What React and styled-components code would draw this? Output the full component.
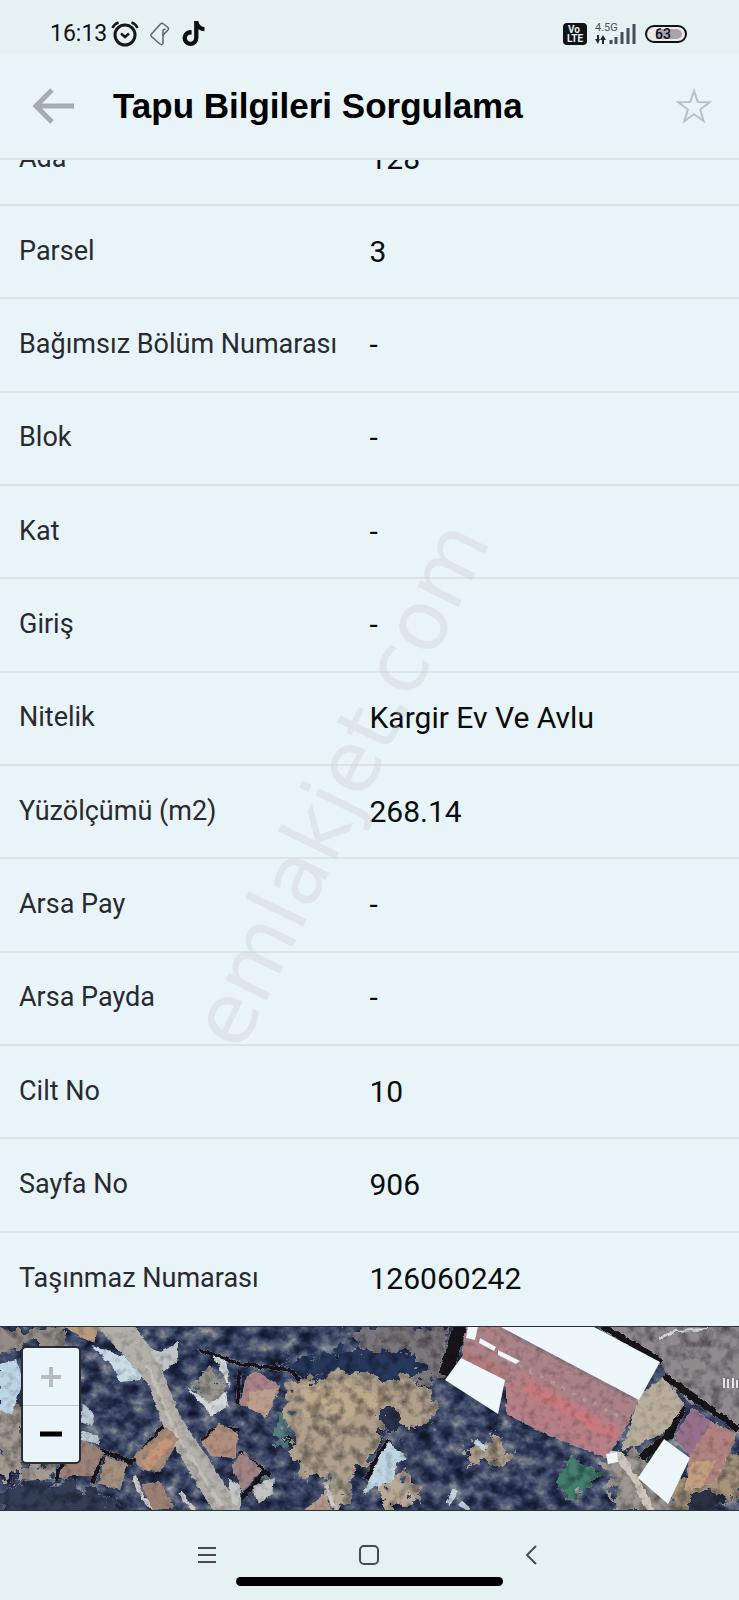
import React from "react";
import styled, { createGlobalStyle } from "styled-components";
import { FaTiktok } from "react-icons/fa";

const rows = [
    { label: "Parsel", value: "3" },
    { label: "Bağımsız Bölüm Numarası", value: "-" },
    { label: "Blok", value: "-" },
    { label: "Kat", value: "-" },
    { label: "Giriş", value: "-" },
    { label: "Nitelik", value: "Kargir Ev Ve Avlu" },
    { label: "Yüzölçümü (m2)", value: "268.14" },
    { label: "Arsa Pay", value: "-" },
    { label: "Arsa Payda", value: "-" },
    { label: "Cilt No", value: "10" },
    { label: "Sayfa No", value: "906" },
    { label: "Taşınmaz Numarası", value: "126060242" },
];

function StatusBar()
{
    return(
        <StatusStyled>
            <div className="group left">
                <time>16:13</time>
                <svg width="28" height="28" viewBox="0 0 28 28" fill="none" stroke="#15191b" strokeWidth="3">
                    <circle cx="14" cy="15" r="10" />
                    <path d="M1.5 8 Q3 4 7.500 2.500 M20.500 2.500 Q25 4 26.500 8" strokeWidth="2.500" />
                    <path d="M10 13.500 L14 17 L18 13.500" strokeWidth="2.500" />
                </svg>
                <svg className="sign" width="22" height="26" viewBox="0 0 22 26" fill="none" stroke="#5d6468" strokeWidth="1.500">
                    <path d="M2 13.500 L11.500 3 Q13 1.500 14.500 3 L19 6.500 Q20 8 19 9 L14 14 V22.500 Q13 24.500 11 23 L2.500 15.500 Q1.500 14.500 2 13.500 Z" />
                    <path d="M14 15 V9 M14 9 L16.500 8" />
                </svg>
                <FaTiktok className="tiktok" size={25} />
            </div>
            <div className="group">
                <svg width="24" height="22" viewBox="0 0 24 22">
                    <rect width="24" height="22" rx="4" fill="#101314" />
                    <text x="11" y="10" textAnchor="middle" fill="#e5f0f2" fontSize="10" fontWeight="700">Vo</text>
                    <text x="12" y="19" textAnchor="middle" fill="#e5f0f2" fontSize="10" fontWeight="700">LTE</text>
                </svg>
                <svg width="42" height="24" viewBox="0 0 42 24">
                    <text x="0" y="9" fill="#4b5154" fontSize="11">4.5G</text>
                    <path d="M0 17 H5 L3 22 Z M2 13 H4 V18 H2 Z M5 18 L8 13 L11 18 Z M7 17 H9 V22 H7 Z" fill="#22272a" />
                    <path d="M14 22 V18 M19 22 V15 M25 22 V10 M31 22 V6 M37 22 V2" transform="translate(2 0)" stroke="#494d5a" strokeWidth="3" />
                </svg>
                <svg className="battery" width="42" height="18" viewBox="0 0 42 18">
                    <rect x="1" y="1" width="40" height="16" rx="8" fill="#eee9ec" stroke="#101314" strokeWidth="2" />
                    <path d="M11 4 H32 Q37 5 37 9 T32 14 H11 Z" fill="#8c8493" opacity=".7" />
                    <text x="18" y="14" textAnchor="middle" fill="#101314" fontSize="14" fontWeight="500">63</text>
                </svg>
            </div>
        </StatusStyled>
    )
}

function TopBar()
{
    return(
        <TopBarStyled>
            <button aria-label="Geri">
                <svg width="42" height="36" viewBox="0 0 42 36" fill="none" stroke="#a5adb3" strokeWidth="5">
                    <path d="M3 18 H41 M19 2 L3 18 L19 34" />
                </svg>
            </button>
            <h1>Tapu Bilgileri Sorgulama</h1>
            <button aria-label="Favorilere ekle">
                <svg width="36" height="36" viewBox="0 0 36 36" fill="none" stroke="#b9c1c6" strokeWidth="2">
                    <path d="M18 3 L21.800 14 L33.500 14.300 L24.200 21.500 L27.600 33 L18 26.200 L8.400 33 L11.800 21.500 L2.500 14.300 L14.200 14 Z" />
                </svg>
            </button>
        </TopBarStyled>
    )
}

function AerialView()
{
    return(
        <svg className="aerial" viewBox="0 0 739 185" preserveAspectRatio="xMidYMid slice" aria-hidden="true">
            <defs>
                <filter id="trees" x="0" y="0" width="100%" height="100%" colorInterpolationFilters="sRGB">
                    <feTurbulence type="fractalNoise" baseFrequency=".06 .07" numOctaves="5" seed="21" />
                    <feColorMatrix values="1.400 0 0 0 -.26  1.400 0 0 0 -.26  1.400 0 0 0 -.26  0 0 0 0 1" />
                    <feComponentTransfer>
                        <feFuncR type="table" tableValues=".07 .10 .13 .19 .26 .34 .44 .56 .68" />
                        <feFuncG type="table" tableValues=".09 .12 .17 .23 .30 .38 .46 .58 .69" />
                        <feFuncB type="table" tableValues=".17 .21 .28 .35 .42 .47 .51 .60 .70" />
                    </feComponentTransfer>
                </filter>
                <filter id="ground" x="-10%" y="-10%" width="120%" height="120%" colorInterpolationFilters="sRGB">
                    <feTurbulence type="fractalNoise" baseFrequency=".09" numOctaves="5" seed="3" result="n" />
                    <feDisplacementMap in="SourceGraphic" in2="n" scale="30" xChannelSelector="R" yChannelSelector="G" result="shape" />
                    <feColorMatrix in="n" values="1 0 0 0 .4  1 0 0 0 .4  1 0 0 0 .41  0 0 0 0 1" result="g" />
                    <feBlend in="g" in2="shape" mode="multiply" result="b" />
                    <feComposite in="b" in2="shape" operator="in" />
                </filter>
                <filter id="roof" x="-5%" y="-5%" width="110%" height="110%" colorInterpolationFilters="sRGB">
                    <feTurbulence type="fractalNoise" baseFrequency=".14" numOctaves="3" seed="5" result="n" />
                    <feDisplacementMap in="SourceGraphic" in2="n" scale="5" xChannelSelector="R" yChannelSelector="G" result="shape" />
                    <feColorMatrix in="n" values=".5 0 0 0 .73  .5 0 0 0 .73  .5 0 0 0 .73  0 0 0 0 1" result="g" />
                    <feBlend in="g" in2="shape" mode="multiply" result="b" />
                    <feComposite in="b" in2="shape" operator="in" />
                </filter>
            </defs>
            <rect width="739" height="185" filter="url(#trees)" />

            {/* open ground between the trees */}
            <g filter="url(#ground)">
                <path d="M0 0 H68 L60 20 L30 18 L0 32 Z" fill="#938d86" />
                <path d="M-5 80 L24 84 L24 140 L82 138 L60 152 L0 150 Z" fill="#a39b92" />
                <path d="M284 60 L330 50 L360 46 L410 52 L436 72 L434 96 L412 102 L392 88 L380 96 L378 130 L350 150 L300 148 L288 100 Z" fill="#af9f8b" />
                <path d="M300 64 L340 56 L378 64 L384 84 L350 90 L310 84 Z" fill="#c0aa8c" />
                <path d="M345 0 H450 L440 50 L424 60 L400 46 L362 30 Z" fill="#7b7679" />
                <path d="M468 122 L500 112 L514 130 L506 140 L490 134 L470 140 Z" fill="#b0a08b" />
                <path d="M384 152 L410 150 L420 180 L384 182 Z" fill="#b8aa96" />
                <path d="M590 -10 H760 V116 L686 72 L664 46 Z" fill="#8f8a8c" />
                <path d="M328 148 L350 150 L346 185 L322 185 Z" fill="#b3a996" />
                <path d="M192 60 L212 36 L228 60 L222 80 L204 74 Z" fill="#96968c" />
                <path d="M604 140 L636 120 L680 190 H620 Z" fill="#9d9891" />
                <path d="M680 150 L750 120 V165 L700 190 H665 Z" fill="#a5937c" />
            </g>
            <g filter="url(#ground)">
                <path d="M558 146 Q566 132 590 138 Q604 148 592 160 Q570 170 558 166 Z" fill="#437f6c" />
                <path d="M277 84 L288 90 L286 122 L276 118 Z" fill="#557e80" />
                <path d="M280 36 L340 24 L410 26 L430 46 L400 54 L340 46 L290 54 Z" fill="#26385c" />
                <path d="M0 156 L70 154 L120 176 L120 195 H0 Z" fill="#343f57" />
                <path d="M380 86 L396 82 L404 94 L398 108 L384 104 Z" fill="#2b324b" />
                <path d="M688 170 L710 162 L724 174 L716 190 H690 Z" fill="#2a3147" />
            </g>

            {/* shadows along the walls */}
            <g fill="none" stroke="#171419" strokeWidth="7" filter="url(#roof)">
                <path d="M460 0 L445 50" strokeWidth="14" />
                <path d="M602 0 L662 36 M664 50 L739 104" />
                <path d="M682 80 L668 110 L642 132" strokeWidth="9" />
                <path d="M82 118 L132 136 L166 98 M66 128 L56 154 M102 130 L92 158" strokeWidth="5" />
                <path d="M202 116 L214 104 L240 104 M240 126 L270 150 M264 146 L242 172" strokeWidth="5" />
                <path d="M200 24 L240 38 L290 44 L300 54 M240 46 L238 78" strokeWidth="4" />
                <path d="M390 114 L376 134 L366 154" strokeWidth="6" />
            </g>

            {/* road and yards */}
            <g filter="url(#roof)">
                <path d="M96 0 H136 L156 30 L180 90 L214 142 L242 185 H214 L192 150 L164 102 L150 60 L128 34 Z" fill="#b3b0aa" />
                <path d="M148 40 L176 108 L222 180" fill="none" stroke="#c4c0b9" strokeWidth="4" />
                <path d="M148 22 L162 26 L178 16 L178 34 L164 46 Z" fill="#bfc4c6" />
                <path d="M92 20 L124 30 L142 50 L140 54 L120 56 L112 40 Z" fill="#c9dbe5" />
                <path d="M0 38 L16 34 L23 56 L12 88 L0 84 Z" fill="#bdd6e6" />
                <path d="M82 78 L94 88 L92 100 L80 96 Z M80 104 L100 110 L98 118 L82 114 Z" fill="#bdcdd8" />
                <path d="M188 62 L206 74 L214 76 L226 66 L228 80 L212 90 Z M212 30 L226 34 L230 62 L222 46 Z" fill="#d2d8db" />
                <path d="M374 144 L380 130 L390 116 L406 132 L396 138 L394 154 L372 162 L362 168 Z" fill="#bfd6e3" />
                <path d="M228 152 L240 160 L240 182 L232 176 Z M252 160 L274 152 L272 168 L258 178 Z" fill="#c4c6c5" />
                <path d="M640 68 L664 52 L684 78 L668 104 L640 118 L622 124 Z" fill="#b8ae9b" />
                <path d="M606 124 L622 126 L648 168 L654 185 H646 L630 150 Z" fill="#cfc8ba" />
                <path d="M134 150 L140 168 L154 184 M180 166 L194 184 M326 160 L336 185" fill="none" stroke="#d2cdc6" strokeWidth="4" />
                <path d="M448 178 L456 164 M460 176 L468 184 M476 116 L486 122" fill="none" stroke="#c0d3de" strokeWidth="5" />
                <path d="M659 12 L676 5 L708 3" fill="none" stroke="#d4dcdf" strokeWidth="2" />
            </g>

            {/* houses */}
            <g filter="url(#roof)">
                <path d="M64 0 L98 0 L94 18 Z" fill="#b99c80" />
                <path d="M246 50 L258 46 L280 60 L270 84 L240 80 Z" fill="#a98287" />
                <path d="M250 66 L278 62 L266 92 L246 80 Z" fill="#baa08c" />
                <path d="M134 130 L166 100 L180 112 L160 146 L140 142 Z" fill="#a78a78" />
                <path d="M140 136 L166 112 L174 116 L150 144 Z" fill="#c8977a" />
                <path d="M202 116 L220 98 L238 108 L236 132 L212 130 Z" fill="#b08e7e" />
                <path d="M232 140 L244 126 L262 144 L242 166 Z" fill="#a18484" />
                <path d="M84 114 L104 126 L92 150 L60 150 L64 138 Z" fill="#9b8279" />
                <path d="M106 130 L128 138 L120 164 L98 158 Z" fill="#a3907e" />
                <path d="M142 158 L160 156 L174 182 L152 184 Z" fill="#9d8074" />
                <path d="M312 178 L324 168 L332 185 H304 Z" fill="#b3978a" />
                <path d="M466 0 H506 L640 72 L624 106 L606 132 L550 110 L506 88 L506 54 L462 26 Z" fill="#ab8287" />
                <path d="M464 22 L506 44 L506 60 L462 34 Z" fill="#b37b7e" />
                <path d="M508 56 L522 44 L622 102 L606 132 L548 106 L506 88 Z" fill="#b77f86" />
                <path d="M526 60 L616 110" fill="none" stroke="#ca7a7e" strokeWidth="12" />
                <path d="M508 34 L622 92" stroke="#b9999d" strokeWidth="3" strokeDasharray="4 8" />
                <path d="M500 2 L636 74" stroke="#8d7980" strokeWidth="3" />
                <path d="M692 82 L714 98 L690 130 L674 112 Z" fill="#96708a" />
                <path d="M712 96 L737 108 L716 156 L686 164 L690 130 Z" fill="#b18380" />
                <path d="M692 136 L716 134 L702 162 L684 164 Z" fill="#c39f80" />
            </g>
            <g fill="#edf6f9">
                <path d="M499 0 H592 L660 36 L639 74 Z" />
                <path d="M461 32 L505 54 L498 88 L445 54 Z" />
                <path d="M468 0 H478 L475 14 L466 12 Z" />
                <path d="M480 12 L496 21 L494 25 L479 17 Z M498 24 L520 35 L516 38 L498 29 Z" />
                <path d="M664 113 L690 132 L668 178 L638 152 Z" />
                <path d="M606 128 L617 126 L618 136 L608 138 Z" />
            </g>
            <path d="M724 52 V62 M728 53 V62 M733 52 V62 M737 54 V62" stroke="#e2e5e7" strokeWidth="2" />
            <path d="M0 .5 H739 M0 184.500 H739" stroke="#2b303b" />
        </svg>
    )
}

function MapView()
{
    return(
        <MapStyled>
            <AerialView />
            <div className="zoom">
                <button aria-label="Yakınlaştır" disabled>
                    <svg width="22" height="22" viewBox="0 0 22 22" stroke="#b5bbbe" strokeWidth="4">
                        <path d="M1 11 H21 M11 1 V21" />
                    </svg>
                </button>
                <button aria-label="Uzaklaştır">
                    <svg width="22" height="22" viewBox="0 0 22 22" stroke="#000" strokeWidth="5">
                        <path d="M0 11 H22" />
                    </svg>
                </button>
            </div>
        </MapStyled>
    )
}

function SystemNav()
{
    return(
        <NavStyled>
            <div className="keys">
                <button aria-label="Son uygulamalar">
                    <svg width="20" height="20" viewBox="0 0 20 20" stroke="#4a4b52" strokeWidth="2">
                        <path d="M1 3 H19 M1 10 H19 M1 17 H19" />
                    </svg>
                </button>
                <button aria-label="Ana ekran">
                    <svg width="20" height="20" viewBox="0 0 20 20" fill="none" stroke="#4a4b52" strokeWidth="2">
                        <rect x="1" y="1" width="18" height="18" rx="4" />
                    </svg>
                </button>
                <button aria-label="Geri tuşu">
                    <svg width="20" height="20" viewBox="0 0 20 20" fill="none" stroke="#4a4b52" strokeWidth="2">
                        <path d="M14 1 L5 10 L14 19" />
                    </svg>
                </button>
            </div>
            <div className="handle" />
        </NavStyled>
    )
}

function App()
{
    return(
        <AppStyled>
            <GlobalStyle />
            <StatusBar />
            <TopBar />
            <DetailsStyled>
                <Row $clipped>
                    <dt>Ada</dt>
                    <dd>128</dd>
                </Row>
                {rows.map((row) => {
                    const { label, value } = row;
                    return <Row key={label}>
                        <dt>{label}</dt>
                        <dd>{value}</dd>
                    </Row>
                })}
                <Watermark aria-hidden="true">emlakjet.com</Watermark>
            </DetailsStyled>
            <MapView />
            <SystemNav />
        </AppStyled>
    )
}

const GlobalStyle = createGlobalStyle`
    *{
        box-sizing: border-box;
        margin: 0;
        padding: 0;
    }
    body{
        background: #e8f4f8;
        font-family: Roboto, "Noto Sans", sans-serif;
        color: #101214;
    }
    button{
        display: flex;
        align-items: center;
        justify-content: center;
        background: none;
        border: none;
    }
    svg{
        display: block;
        flex: none;
    }
`;

const AppStyled = styled.main`
    display: flex;
    flex-direction: column;
    min-height: 100vh;
`;

const StatusStyled = styled.header`
    display: flex;
    justify-content: space-between;
    align-items: center;
    height: 53px;
    padding: 14px 52px 0 50px;
    background: #e5f1f3;
    .group{
        display: flex;
        align-items: center;
        gap: 8px;
    }
    .left{
        gap: 4px;
    }
    time{
        font-size: 23px;
    }
    .sign{
        margin: 0 6px;
    }
    .tiktok{
        color: #0d0f10;
    }
`;

const TopBarStyled = styled.header`
    display: flex;
    align-items: center;
    height: 107px;
    padding: 0 27px 0 33px;
    border-bottom: 2px solid #dce4e7;
    h1{
        flex: 1;
        margin-left: 38px;
        font-family: "Liberation Sans", Arial, sans-serif;
        font-size: 35px;
        font-weight: 700;
        color: #000;
    }
`;

const DetailsStyled = styled.dl`
    position: relative;
    flex: 1;
    display: grid;
    grid-template-rows: 46px repeat(12, minmax(72px, 1fr));
    overflow: hidden;
`;

/* the clipped row is scrolled halfway under the top bar */
const Row = styled.div`
    display: grid;
    grid-template-columns: 50% 50%;
    align-items: center;
    align-self: ${(props) => (props.$clipped ? "end" : "stretch")};
    height: ${(props) => (props.$clipped ? "93px" : "auto")};
    border-bottom: 2px solid #dce4e7;
    dt{
        padding: 0 0 2px 19px;
        font-size: 27px;
        line-height: 32px;
        color: #292a30;
    }
    dd{
        font-size: 30px;
        line-height: 36px;
        color: #0b0c0e;
    }
    &:last-of-type{
        border-bottom: none;
    }
`;

const Watermark = styled.span`
    position: absolute;
    top: 53.5%;
    left: 46%;
    transform: translate(-50%, -50%) rotate(-64deg);
    font-family: "DejaVu Sans", sans-serif;
    font-size: 84px;
    color: rgba(205, 208, 212, 0.38);
    pointer-events: none;
`;

const MapStyled = styled.section`
    position: relative;
    height: 185px;
    .aerial{
        width: 100%;
        height: 100%;
    }
    /* zoom control floats over the map */
    .zoom{
        position: absolute;
        top: 20px;
        left: 21px;
        width: 60px;
        border: 2px solid #2b2d33;
        border-radius: 5px;
        background: #eaf5f9;
        button{
            width: 100%;
            height: 57px;
        }
        button + button{
            border-top: 1px solid #c3cbd0;
        }
    }
`;

const NavStyled = styled.nav`
    display: flex;
    flex-direction: column;
    align-items: center;
    justify-content: flex-end;
    gap: 12px;
    height: 89px;
    padding-bottom: 14px;
    background: #e5f1f3;
    .keys{
        align-self: stretch;
        display: grid;
        grid-template-columns: repeat(3, 22%);
        justify-content: center;
    }
    .handle{
        width: 36%;
        height: 9px;
        border-radius: 5px;
        background: #000;
    }
`;

export default App;
